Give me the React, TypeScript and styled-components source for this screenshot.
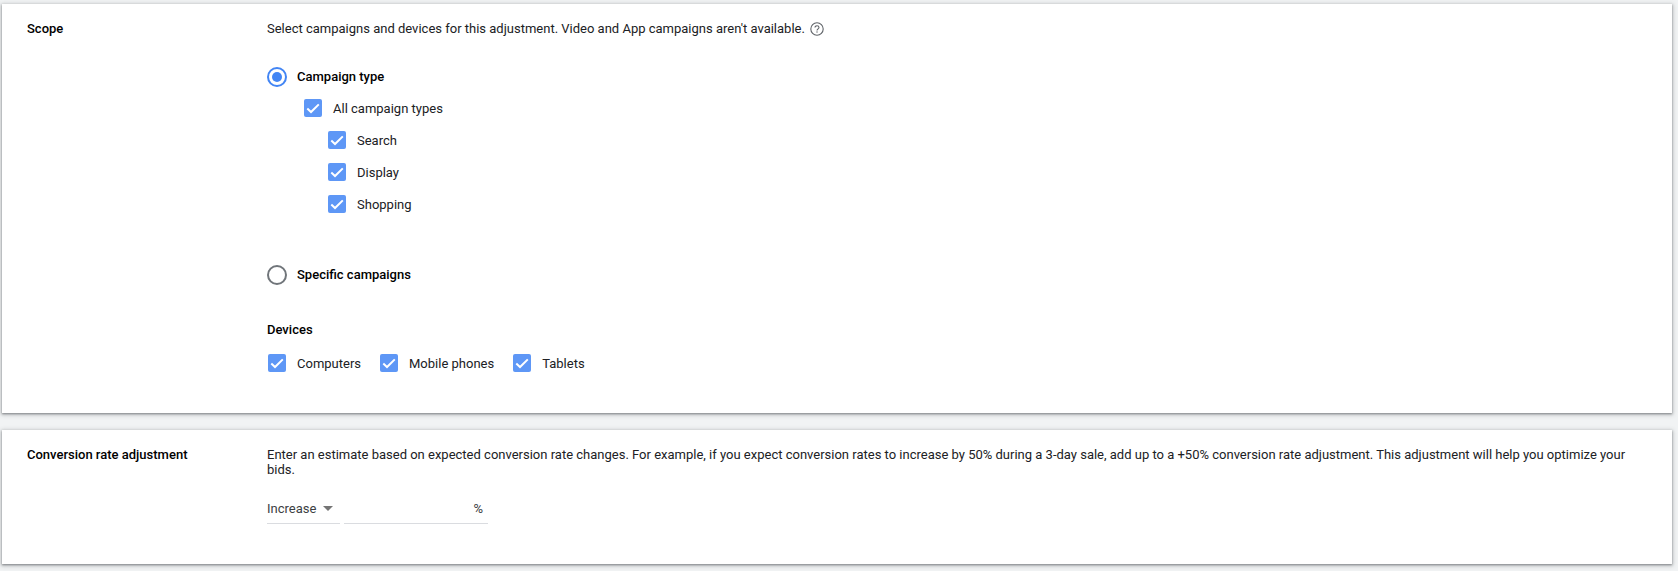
import React from 'react';
import styled, { createGlobalStyle } from 'styled-components';

const GlobalStyle = createGlobalStyle`
  html, body {
    margin: 0;
    background: #f1f3f4;
  }
  body {
    font-family: Roboto, "Liberation Sans", sans-serif;
    font-size: 13px;
    line-height: 16px;
    color: #202124;
  }
`;

const Page = styled.div`
  width: 1678px;
  height: 571px;
  box-sizing: border-box;
  padding: 4px 6px 0 2px;
  overflow: hidden;
  display: flex;
  flex-direction: column;
  gap: 17px;
`;

const Card = styled.section<{ $height: number }>`
  height: ${(p) => p.$height}px;
  box-sizing: border-box;
  padding-top: 17px;
  background: #fff;
  box-shadow: 0 1px 2px rgba(60, 64, 67, 0.5), 0 1px 4px 1px rgba(60, 64, 67, 0.25);
  display: grid;
  grid-template-columns: 265px 1fr;
`;

const Heading = styled.h2`
  margin: 0;
  padding-left: 25px;
  font-size: 13px;
  line-height: 16px;
  font-weight: 500;
  color: #000;
`;

const Body = styled.div`
  min-width: 0;
  padding-right: 24px;
`;

const Description = styled.p`
  margin: 0;
  display: flex;
  align-items: center;
  gap: 5px;
`;

const Wrapped = styled.p`
  margin: 0;
  line-height: 15px;
`;

const HelpIcon = styled.svg`
  width: 14px;
  height: 14px;
  flex: none;
`;

const RadioRow = styled.label<{ $top: number }>`
  display: flex;
  align-items: center;
  gap: 10px;
  height: 20px;
  margin-top: ${(p) => p.$top}px;
  font-weight: 500;
  color: #000;
`;

const Radio = styled.span<{ $on?: boolean }>`
  width: 20px;
  height: 20px;
  box-sizing: border-box;
  flex: none;
  border-radius: 50%;
  border: 2px solid ${(p) => (p.$on ? '#4285f4' : '#70757a')};
  display: flex;
  align-items: center;
  justify-content: center;

  &::after {
    content: '';
    display: ${(p) => (p.$on ? 'block' : 'none')};
    width: 10px;
    height: 10px;
    border-radius: 50%;
    background: #4285f4;
  }
`;

const CheckList = styled.div<{ $indent: number }>`
  display: flex;
  flex-direction: column;
  gap: 14px;
  margin-top: 12px;
  padding-left: ${(p) => p.$indent}px;
`;

const SubList = styled.div`
  display: flex;
  flex-direction: column;
  gap: 14px;
  padding-left: 24px;
`;

// text line is taller than the box so the label sits a pixel below its centre
const CheckRow = styled.label`
  display: flex;
  align-items: flex-start;
  gap: 11px;
  height: 18px;
  line-height: 20px;
`;

const Box = styled.span`
  width: 18px;
  height: 18px;
  flex: none;
  border-radius: 2px;
  background: #5e97f6;
  display: flex;
  align-items: center;
  justify-content: center;
`;

const DevicesTitle = styled.h3`
  margin: 37px 0 0;
  font-size: 13px;
  line-height: 16px;
  font-weight: 500;
  color: #000;
`;

const DeviceRow = styled.div`
  display: flex;
  gap: 19px;
  margin-top: 16px;
  padding-left: 1px;
`;

const FieldRow = styled.div`
  display: flex;
  gap: 4px;
  margin-top: 17px;
`;

const Select = styled.div`
  width: 73px;
  height: 30px;
  box-sizing: border-box;
  padding-top: 7px;
  border-bottom: 1px solid #dadce0;
  display: flex;
  gap: 7px;
  color: #3c4043;
`;

const Caret = styled.span`
  width: 0;
  height: 0;
  margin-top: 5px;
  border-left: 5px solid transparent;
  border-right: 5px solid transparent;
  border-top: 5px solid #757575;
`;

const PercentField = styled.div`
  width: 144px;
  height: 30px;
  box-sizing: border-box;
  padding: 7px 5px 0 0;
  border-bottom: 1px solid #dadce0;
  text-align: right;
  color: #3c4043;
`;

const Check = () => (
  <Box>
    <svg width="14" height="14" viewBox="0 0 14 14" fill="none">
      <path d="M1.3 7.6L5 11L12.8 3.4" stroke="#fff" strokeWidth="2" />
    </svg>
  </Box>
);

const CheckItem = ({ label }: { label: string }) => (
  <CheckRow>
    <Check />
    {label}
  </CheckRow>
);

const App: React.FC = () => {
  return (
    <Page>
      <GlobalStyle />
      <Card $height={409}>
        <Heading>Scope</Heading>
        <Body>
          <Description>
            Select campaigns and devices for this adjustment. Video and App campaigns aren't available.
            <HelpIcon viewBox="0 0 14 14" fill="none">
              <circle cx="7" cy="7" r="6.2" stroke="#5f6368" strokeWidth="1.1" />
              <path d="M5 5.6C5 4.5 5.9 3.8 7 3.8C8.1 3.8 9 4.5 9 5.5C9 6.8 7 6.9 7 8.6" stroke="#5f6368" strokeWidth="1.1" />
              <rect x="6.4" y="9.4" width="1.2" height="1.2" fill="#5f6368" />
            </HelpIcon>
          </Description>
          <RadioRow $top={30}>
            <Radio $on />
            Campaign type
          </RadioRow>
          <CheckList $indent={37}>
            <CheckItem label="All campaign types" />
            <SubList>
              <CheckItem label="Search" />
              <CheckItem label="Display" />
              <CheckItem label="Shopping" />
            </SubList>
          </CheckList>
          <RadioRow $top={52}>
            <Radio />
            Specific campaigns
          </RadioRow>
          <DevicesTitle>Devices</DevicesTitle>
          <DeviceRow>
            <CheckItem label="Computers" />
            <CheckItem label="Mobile phones" />
            <CheckItem label="Tablets" />
          </DeviceRow>
        </Body>
      </Card>
      <Card $height={134}>
        <Heading>Conversion rate adjustment</Heading>
        <Body>
          <Wrapped>
            Enter an estimate based on expected conversion rate changes. For example, if you expect conversion rates to increase by 50% during a 3-day sale, add up to a +50% conversion rate adjustment. This adjustment will help you optimize your bids.
          </Wrapped>
          <FieldRow>
            <Select>
              Increase
              <Caret />
            </Select>
            <PercentField>%</PercentField>
          </FieldRow>
        </Body>
      </Card>
    </Page>
  );
};

export default App;
